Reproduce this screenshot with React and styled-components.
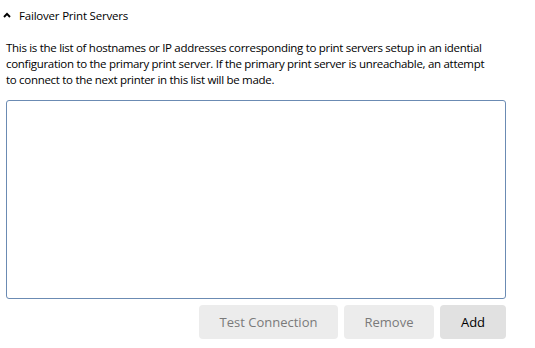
import styled, { createGlobalStyle } from "styled-components";

const GlobalStyle = createGlobalStyle`
  html, body {
    margin: 0;
    padding: 0;
    background: #ffffff;
  }
  body {
    font-family: "Open Sans", "Noto Sans", sans-serif;
    color: #000000;
  }
`;

export default function App() {
  return (
    <Page>
      <GlobalStyle />
      <Header>
        <Chevron viewBox="0 0 8 6" aria-hidden="true">
          <path d="M1 5 L4 1.8 L7 5" fill="none" stroke="#000" strokeWidth="1.9" />
        </Chevron>
        <HeaderTitle>Failover Print Servers</HeaderTitle>
      </Header>
      <Description>
        This is the list of hostnames or IP addresses corresponding to print servers setup in an idential
        <br />
        configuration to the primary print server. If the primary print server is unreachable, an attempt
        <br />
        to connect to the next printer in this list will be made.
      </Description>
      <ServerList />
      <ButtonRow>
        <ActionButton disabled $width={139}>Test Connection</ActionButton>
        <ActionButton disabled $width={90}>Remove</ActionButton>
        <ActionButton $width={66}>Add</ActionButton>
      </ButtonRow>
    </Page>
  );
}

const Page = styled.div`
  width: 535px;
  height: 348px;
  box-sizing: border-box;
  padding: 0 29px 0 6px;
  display: flex;
  flex-direction: column;
`;

const Header = styled.div`
  display: flex;
  align-items: center;
  height: 30px;
  margin-left: -3px;
  gap: 8px;
`;

const Chevron = styled.svg`
  width: 8px;
  height: 6px;
`;

const HeaderTitle = styled.span`
  font-size: 11.5px;
  letter-spacing: -0.2px;
`;

const Description = styled.p`
  margin: 10px 0 0 0;
  font-size: 11.5px;
  line-height: 16px;
  letter-spacing: -0.3px;
  white-space: nowrap;
`;

const ServerList = styled.div`
  margin-top: 12px;
  height: 199px;
  box-sizing: border-box;
  border: 1px solid #6b8bb3;
  border-radius: 3px;
  background: #ffffff;
`;

const ButtonRow = styled.div`
  display: flex;
  justify-content: flex-end;
  gap: 6px;
  margin-top: 6px;
`;

const ActionButton = styled.button`
  width: ${(p) => p.$width}px;
  height: 34px;
  border: none;
  border-radius: 4px;
  background: #e1e1e1;
  color: #000000;
  font-family: "Open Sans", "Noto Sans", sans-serif;
  font-size: 13px;
  padding: 0;
  &:disabled {
    background: #ececec;
    color: #7a7a7a;
  }
`;
